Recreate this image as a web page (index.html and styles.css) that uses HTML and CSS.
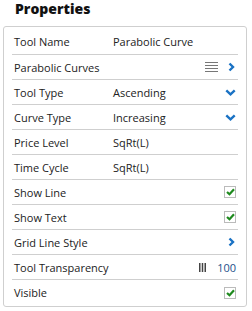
FILE: index.html
```html
<!DOCTYPE HTML>
<html>
    <head>
        <meta name="viewport" content="width=device-width, initial-scale=1.0">
        <title>Properties</title>
        <link rel="stylesheet" href="styles.css">
    </head>
    <body>
        <h2 class="title">Properties</h2>
        <div class="panel">
            <div class="row">
                <span class="label">Tool Name</span>
                <span class="value">Parabolic Curve</span>
            </div>
            <div class="row">
                <span class="label">Parabolic Curves</span>
                <span class="ctrl">
                    <svg class="lines" width="13" height="10" viewBox="0 0 13 10"><path d="M0 0.5H13M0 3.5H13M0 6.5H13M0 9.5H13" stroke="#777" stroke-width="1"/></svg>
                    <svg class="chev" width="7" height="10" viewBox="0 0 7 10"><path d="M1.5 1.5L5 5L1.5 8.5" fill="none" stroke="#1a72c4" stroke-width="2.4"/></svg>
                </span>
            </div>
            <div class="row">
                <span class="label">Tool Type</span>
                <span class="value">Ascending</span>
                <span class="ctrl">
                    <svg width="11" height="7" viewBox="0 0 11 7"><path d="M1.3 1.3L5.5 5.3L9.7 1.3" fill="none" stroke="#1a72c4" stroke-width="2.4"/></svg>
                </span>
            </div>
            <div class="row">
                <span class="label">Curve Type</span>
                <span class="value">Increasing</span>
                <span class="ctrl">
                    <svg width="11" height="7" viewBox="0 0 11 7"><path d="M1.3 1.3L5.5 5.3L9.7 1.3" fill="none" stroke="#1a72c4" stroke-width="2.4"/></svg>
                </span>
            </div>
            <div class="row">
                <span class="label">Price Level</span>
                <span class="value">SqRt(L)</span>
            </div>
            <div class="row">
                <span class="label">Time Cycle</span>
                <span class="value">SqRt(L)</span>
            </div>
            <div class="row">
                <span class="label">Show Line</span>
                <span class="ctrl"><span class="check"><svg width="9" height="8" viewBox="0 0 9 8"><path d="M1 4L3.5 6.3L8 1.2" fill="none" stroke="#1e8a1e" stroke-width="2.2"/></svg></span></span>
            </div>
            <div class="row">
                <span class="label">Show Text</span>
                <span class="ctrl"><span class="check"><svg width="9" height="8" viewBox="0 0 9 8"><path d="M1 4L3.5 6.3L8 1.2" fill="none" stroke="#1e8a1e" stroke-width="2.2"/></svg></span></span>
            </div>
            <div class="row">
                <span class="label">Grid Line Style</span>
                <span class="ctrl">
                    <svg class="chev" width="7" height="10" viewBox="0 0 7 10"><path d="M1.5 1.5L5 5L1.5 8.5" fill="none" stroke="#1a72c4" stroke-width="2.4"/></svg>
                </span>
            </div>
            <div class="row">
                <span class="label">Tool Transparency</span>
                <span class="ctrl">
                    <svg class="bars" width="7" height="9" viewBox="0 0 7 9"><path d="M0.75 0V9M3.5 0V9M6.25 0V9" stroke="#444" stroke-width="1.5"/></svg>
                    <span class="num">100</span>
                </span>
            </div>
            <div class="row">
                <span class="label">Visible</span>
                <span class="ctrl"><span class="check"><svg width="9" height="8" viewBox="0 0 9 8"><path d="M1 4L3.5 6.3L8 1.2" fill="none" stroke="#1e8a1e" stroke-width="2.2"/></svg></span></span>
            </div>
        </div>
    </body>
</html>
```
FILE: styles.css
```css
body{
    margin: 0;
    font-family: "Open Sans", Arial, sans-serif;
    background-color: #fff;
    color: #222;
}
.title{
    margin: 0;
    padding: 0 0 0 15px;
    height: 26px;
    line-height: 17px;
    font-size: 14px;
    font-weight: 800;
    color: #111;
}
.panel{
    margin-left: 3px;
    width: 226px;
    border: 1px solid #cfcfcf;
    border-radius: 3px;
    padding: 2px 8px 1px 8px;
}
.row{
    display: flex;
    align-items: center;
    height: 24px;
    padding: 0 2px;
    border-bottom: 1px solid #cfcfcf;
    font-size: 11px;
    white-space: nowrap;
}
.row:first-child{
    height: 25px;
}
.row:last-child{
    border-bottom: none;
    height: 25px;
}
.label{
    flex: 0 0 99px;
}
.value{
    flex: 1;
}
.ctrl{
    margin-left: auto;
    display: flex;
    align-items: center;
}
.lines{
    margin-right: 10px;
}
.chev{
    margin-right: 1px;
}
.bars{
    margin-right: 11px;
}
.num{
    color: #1d4f8a;
}
.check{
    width: 10px;
    height: 10px;
    border: 1px solid #bbb;
    display: flex;
    align-items: center;
    justify-content: center;
}
```
